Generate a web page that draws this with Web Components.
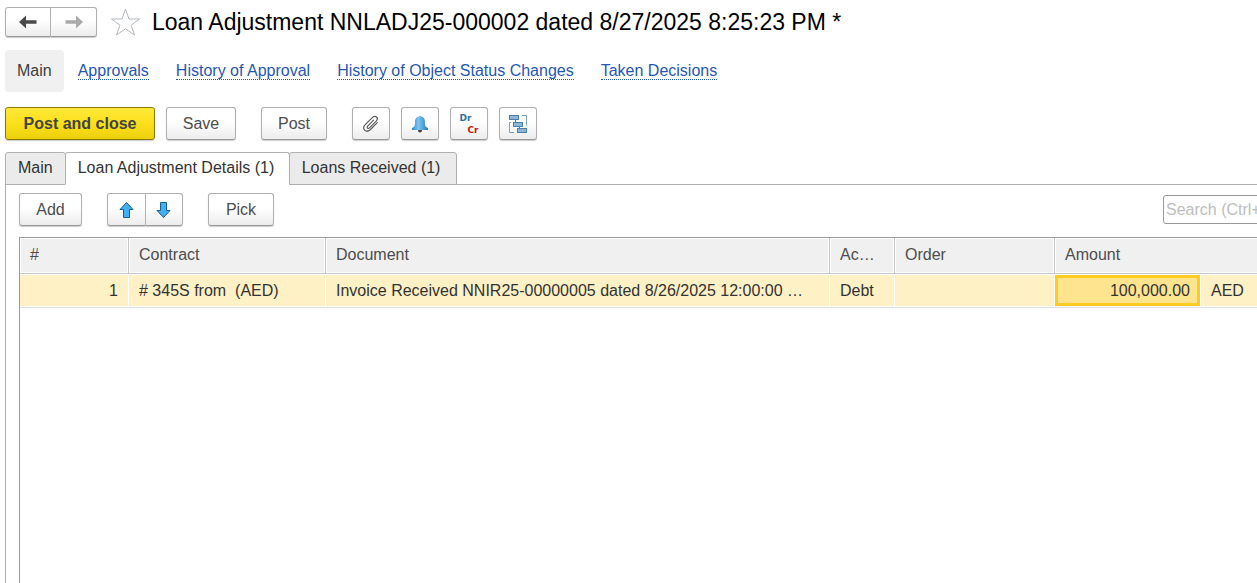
<!DOCTYPE html>
<html lang="en">
<head>
<meta charset="utf-8">
<title>Loan Adjustment</title>
<style>
  html, body { margin: 0; height: 100%; }
  body { overflow: hidden; background: #fff; color: #333; font: 16px/20px "Liberation Sans", Arial, sans-serif; }
</style>
</head>
<body>
<loan-form></loan-form>
<script>
const define = (name, html, setup) => customElements.define(name, class extends HTMLElement {
  constructor() {
    super();
    this.attachShadow({ mode: "open" }).innerHTML = html;
  }
  connectedCallback() { if (setup) setup(this, this.shadowRoot); }
});

define("form-button", `
<style>
  :host { display: block; flex: none; }
  button { box-sizing: border-box; display: flex; align-items: center; justify-content: center;
    width: 100%; height: 33px; margin: 0; padding: 0 16px; font: inherit; color: #4d4d4d; white-space: nowrap;
    border: 1px solid #b0b0b0; border-bottom-color: #999; border-radius: 3px;
    background: linear-gradient(#fff 45%, #ececec); box-shadow: 0 1px 1px #ccc; }
  :host([primary]) button { font-weight: bold; color: #444; border-color: #8a7800;
    background: linear-gradient(#ffe838, #fce01c 50%, #ecd00c); }
  :host([icon]) button { width: 38px; padding: 0; }
  :host([first]) button { width: 39px; border-radius: 3px 0 0 3px; }
  :host([last]) button { border-radius: 0 3px 3px 0; border-left: 0; width: 37px; }
  :host([wide]) button { width: 46px; height: 30px; }
</style>
<button type="button"><slot></slot></button>`,
(el, root) => {
  const b = root.querySelector("button");
  if (el.hasAttribute("label")) b.setAttribute("aria-label", el.getAttribute("label"));
  b.disabled = el.hasAttribute("disabled");
});

define("nav-link", `
<style>
  :host { display: block; flex: none; white-space: nowrap; }
  a { color: #1f57b5; text-decoration: none; display: block; line-height: 17px; border-bottom: 1px dotted #1f57b5; }
</style>
<a href="#"><slot></slot></a>`);

define("form-header", `
<style>
  :host { display: flex; align-items: center; height: 44px; padding-left: 5px; }
  .history { display: flex; }
  h1 { margin: 0 0 0 11px; font-size: 23px; line-height: 28px; font-weight: normal; color: #000; white-space: nowrap; }
  .star { margin-left: 13px; padding: 0; border: 0; background: none; height: 30px; }
  svg { display: block; }
</style>
<div class="history">
  <form-button icon first wide label="Back"><svg width="18" height="14" viewBox="0 0 18 14"><path d="M0 7 7 .5V5.300H17.500V8.700H7V13.500Z" fill="#4a4a4a"/></svg></form-button>
  <form-button icon last wide label="Forward" disabled><svg width="18" height="14" viewBox="0 0 18 14"><path d="M18 7 11 .5V5.300H.5V8.700H11V13.500Z" fill="#aaa"/></svg></form-button>
</div>
<button class="star" type="button" aria-label="Favorite"><svg width="31" height="30" viewBox="0 0 31 30"><path d="M15.500 2 19 12H29.500L21 18.200 24.500 28 15.500 21.800 6.500 28 10 18.200 1.500 12H12Z" fill="#fff" stroke="#b4bac0"/></svg></button>
<h1><slot></slot></h1>`);

define("form-nav", `
<style>
  :host { display: flex; align-items: center; gap: 27px; padding: 6px 5px 0; }
  .current { box-sizing: border-box; height: 42px; padding: 11px 12px; margin-right: -13px; background: #f0f0f0; border-radius: 4px; color: #404040; }
</style>
<span class="current" aria-current="page">Main</span>
<slot></slot>`);

define("command-bar", `
<style>
  :host { display: flex; align-items: flex-start; gap: 11px; padding: 15px 5px 0; }
  .post { width: 150px; } .save { width: 70px; } .only { width: 66px; margin: 0 14px; }
  svg { display: block; }
  .entries { display: flex; flex-direction: column; width: 19px; font: bold 9px/12px "DejaVu Sans", sans-serif; text-align: left; }
  .dr { color: #33719b; } .cr { color: #c4180c; align-self: flex-end; }
</style>
<form-button class="post" primary>Post and close</form-button>
<form-button class="save">Save</form-button>
<form-button class="only">Post</form-button>
<form-button icon label="Attached files"><svg width="20" height="20" viewBox="0 0 20 20"><path d="M12.600 6.200 6.600 12.200C5.400 13.700 7 15.200 8.500 13.900L15.200 7.200C18.200 3.900 14.600.6 11.300 3.600L4.200 10.700C.3 14.800 5 19.500 9.200 15.700L16.300 8.600" fill="none" stroke="#5c5c5c" stroke-width="1.200" stroke-linecap="round"/></svg></form-button>
<form-button icon label="Reminder"><svg width="18" height="18" viewBox="0 0 18 18"><defs><linearGradient id="bell"><stop stop-color="#2f8bc9"/><stop offset=".4" stop-color="#7cc4f3"/><stop offset="1" stop-color="#287dbb"/></linearGradient></defs><circle cx="9" cy="15.500" r="2" fill="#444"/><path d="M9 .5 7.800 1.600C4.800 2 4 4.500 4 7.500 4 11 3.500 12 1 13V15H17V13C14.500 12 14 11 14 7.500 14 4.500 13.200 2 10.200 1.600Z" fill="url(#bell)"/></svg></form-button>
<form-button icon label="Debit and credit entries"><span class="entries"><span class="dr">Dr</span><span class="cr">Cr</span></span></form-button>
<form-button icon label="Related documents"><svg width="20" height="20" viewBox="0 0 20 20"><path d="M14 1.500H18.500V11.500M6 18.500H1.500V8.500H3" fill="none" stroke="#7ba3c4"/><path d="M7.500 5V8M11.500 11V15" stroke="#41769f"/><g fill="#8db6d6" stroke="#4a80a9"><rect x="1.500" y="1.500" width="9" height="4"/><rect x="5.500" y="8.500" width="9" height="4"/><rect x="9.500" y="14.500" width="9" height="4"/></g></svg></form-button>`);

define("page-tab", `
<style>
  :host { display: block; flex: none; margin-right: -1px; }
  button { box-sizing: border-box; display: block; width: 100%; height: 33px; margin: 0; padding: 0 12px 2px; font: inherit; color: #333; text-align: left;
    border: 1px solid #b0b0b0; border-radius: 3px 3px 0 0; background: #ebebeb; white-space: nowrap; }
  :host([selected]) button { background: #fff; border-bottom-color: #fff; }
</style>
<button type="button" role="tab"><slot></slot></button>`,
(el, root) => root.querySelector("button").setAttribute("aria-selected", el.hasAttribute("selected")));

define("tab-strip", `
<style>
  :host { display: flex; margin: 12px 0 -1px 5px; position: relative; }
  ::slotted(.details) { width: 225px; }
  ::slotted(.loans) { width: 168px; }
</style>
<slot></slot>`);

define("list-toolbar", `
<style>
  :host { display: flex; align-items: flex-start; gap: 25px; padding: 8px 0 11px; }
  .move { display: flex; }
  .add { width: 63px; } .pick { width: 66px; }
  svg { display: block; }
  input { box-sizing: border-box; width: 199px; height: 29px; margin: 2px 0 0 auto; padding: 0 2px; font: inherit;
    border: 1px solid #999; border-radius: 3px; background: #fff; color: #333; }
  input::placeholder { color: #bdbdbd; opacity: 1; }
</style>
<form-button class="add">Add</form-button>
<div class="move">
  <form-button icon first label="Move up"><svg width="16" height="18" viewBox="0 0 16 18"><path d="M7.500 1.500 14 8.500H10.500V16.500H4.500V8.500H1Z" fill="#43b0f1" stroke="#16608f" stroke-linejoin="round"/></svg></form-button>
  <form-button icon last label="Move down"><svg width="16" height="18" viewBox="0 0 16 18"><path d="M7.500 16.500 14 9.500H10.500V1.500H4.500V9.500H1Z" fill="#43b0f1" stroke="#16608f" stroke-linejoin="round"/></svg></form-button>
</div>
<form-button class="pick">Pick</form-button>
<input type="text" placeholder="Search (Ctrl+F)" aria-label="Search">`);

define("adjustment-table", `
<style>
  :host { display: block; flex: 1; border: 1px solid #999; border-bottom: 0; }
  table { width: 100%; table-layout: fixed; border-collapse: separate; border-spacing: 0; }
  .n { width: 109px; } .contract { width: 197px; } .account { width: 65px; } .order { width: 160px; } .amount { width: 146px; } .currency { width: 160px; }
  th, td { box-sizing: border-box; padding: 0 10px; text-align: left; font-weight: normal; white-space: pre; overflow: hidden; text-overflow: ellipsis; }
  th { height: 36px; padding-bottom: 2px; color: #4d4d4d; background: #f0f0f0; border-right: 1px solid #c6c6c6; border-bottom: 1px solid #c6c6c6; box-shadow: inset 0 0 0 1px #fff; }
  td { height: 34px; background: #fdf1c5; border-right: 1px solid #fff; border-bottom: 1px solid #e0e0e0; box-shadow: inset 0 1px #fff, inset 0 -1px #fff; }
  td.number { text-align: right; }
  td.active { background: #fee48f; box-shadow: inset 0 1px #fff, inset 0 -1px #fff, inset 3px 0 #fecb20, inset -3px 0 #fecb20, inset 0 4px #fecb20, inset 0 -4px #fecb20; }
</style>
<table>
  <colgroup><col class="n"><col class="contract"><col><col class="account"><col class="order"><col class="amount"><col class="currency"></colgroup>
  <thead><tr><th>#</th><th>Contract</th><th>Document</th><th>Ac…</th><th>Order</th><th colspan="2">Amount</th></tr></thead>
  <tbody><tr><td class="number">1</td><td># 345S from  (AED)</td><td>Invoice Received NNIR25-00000005 dated 8/26/2025 12:00:00 …</td><td>Debt</td><td></td><td class="number active">100,000.00</td><td>AED</td></tr></tbody>
</table>`);

define("tab-panel", `
<style>
  :host { display: flex; flex-direction: column; flex: 1; margin: 0 -105px 0 5px; padding-left: 13px; border: 1px solid #b0b0b0; border-width: 1px 0 0 1px; }
</style>
<slot></slot>`);

define("loan-form", `
<style>:host { display: flex; flex-direction: column; min-height: 100vh; overflow: hidden; }</style>
<form-header>Loan Adjustment NNLADJ25-000002 dated 8/27/2025 8:25:23 PM *</form-header>
<form-nav>
  <nav-link>Approvals</nav-link><nav-link>History of Approval</nav-link><nav-link>History of Object Status Changes</nav-link><nav-link>Taken Decisions</nav-link>
</form-nav>
<command-bar></command-bar>
<tab-strip role="tablist">
  <page-tab>Main</page-tab><page-tab class="details" selected>Loan Adjustment Details (1)</page-tab><page-tab class="loans">Loans Received (1)</page-tab>
</tab-strip>
<tab-panel>
  <list-toolbar></list-toolbar>
  <adjustment-table></adjustment-table>
</tab-panel>`);
</script>
</body>
</html>
